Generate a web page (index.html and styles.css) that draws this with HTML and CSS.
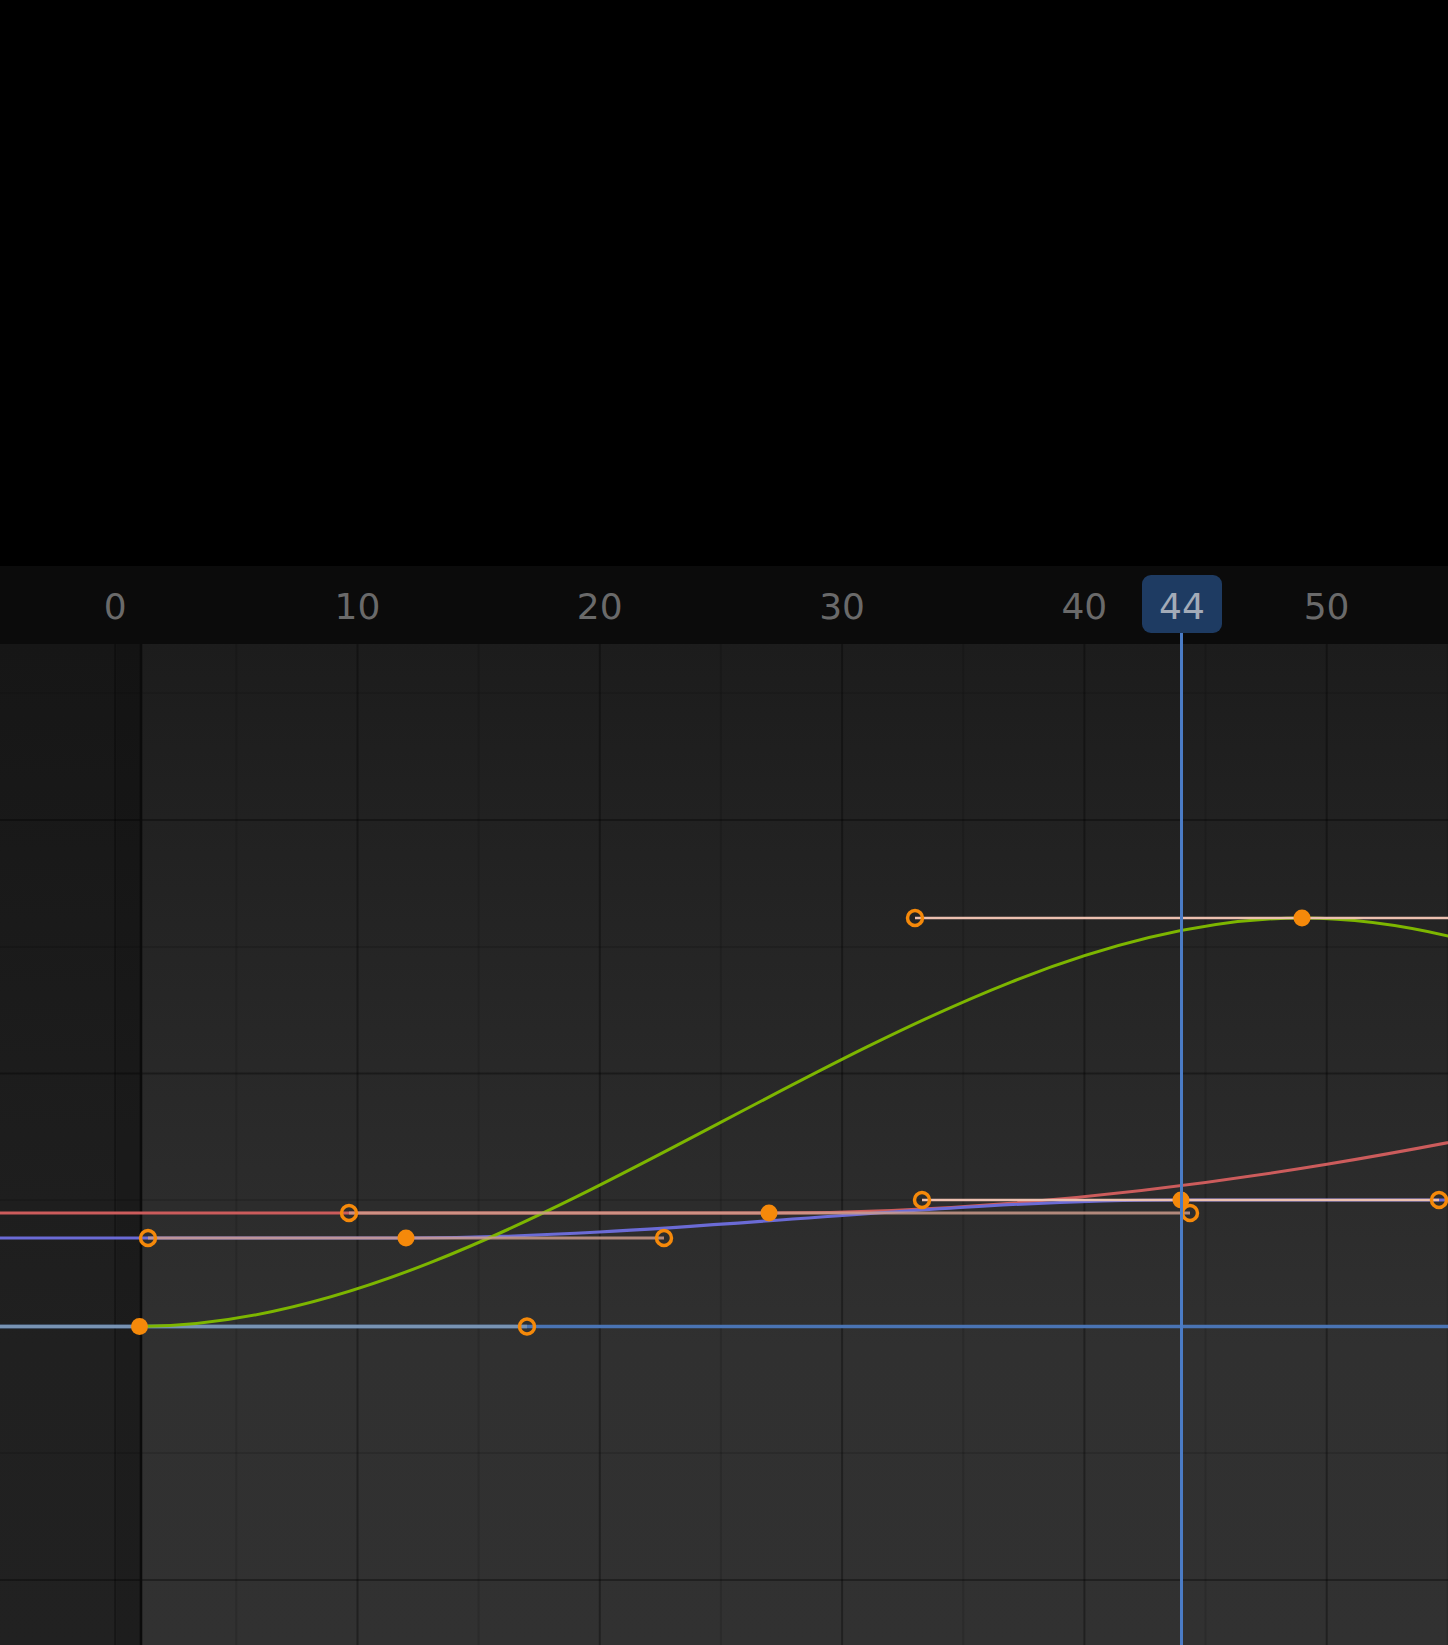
FILE: index.html
```html
<!DOCTYPE html>
<html lang="en">
<head>
<meta charset="utf-8">
<title>Graph Editor</title>
<link rel="stylesheet" href="styles.css">
</head>
<body>
<div class="app">
  <div class="topbar"></div>
  <div class="editor">
    <div class="ruler">
      <span class="tick">0</span>
      <span class="tick">10</span>
      <span class="tick">20</span>
      <span class="tick">30</span>
      <span class="tick">40</span>
      <span class="tick">50</span>
    </div>
    <svg class="graph" width="1448" height="1001" viewBox="0 0 1448 1001" xmlns="http://www.w3.org/2000/svg">
      <defs>
        <linearGradient id="bgMain" x1="0" y1="0" x2="0" y2="1">
          <stop offset="0" stop-color="#1c1c1c"/>
          <stop offset="0.7" stop-color="#303030"/>
          <stop offset="1" stop-color="#313131"/>
        </linearGradient>
        <linearGradient id="bgLeft" x1="0" y1="0" x2="0" y2="1">
          <stop offset="0" stop-color="#161616"/>
          <stop offset="0.7" stop-color="#202020"/>
          <stop offset="1" stop-color="#212121"/>
        </linearGradient>
      </defs>
      <rect x="0" y="0" width="1448" height="1001" fill="url(#bgMain)"/>
      <rect x="0" y="0" width="141" height="1001" fill="url(#bgLeft)"/>
      <rect x="117" y="0" width="24" height="1001" fill="rgba(0,0,0,0.1)"/>

      <g class="minor">
        <line x1="236.3" y1="0" x2="236.3" y2="1001"/>
        <line x1="478.6" y1="0" x2="478.6" y2="1001"/>
        <line x1="720.9" y1="0" x2="720.9" y2="1001"/>
        <line x1="963.2" y1="0" x2="963.2" y2="1001"/>
        <line x1="1205.5" y1="0" x2="1205.5" y2="1001"/>
        <line x1="1447.8" y1="0" x2="1447.8" y2="1001"/>
        <line x1="0" y1="49" x2="1448" y2="49" class="faint"/>
        <line x1="0" y1="303" x2="1448" y2="303"/>
        <line x1="0" y1="556" x2="1448" y2="556"/>
        <line x1="0" y1="809" x2="1448" y2="809"/>
      </g>
      <g class="major">
        <line x1="115.2" y1="0" x2="115.2" y2="1001"/>
        <line x1="357.5" y1="0" x2="357.5" y2="1001"/>
        <line x1="599.8" y1="0" x2="599.8" y2="1001"/>
        <line x1="842.1" y1="0" x2="842.1" y2="1001"/>
        <line x1="1084.4" y1="0" x2="1084.4" y2="1001"/>
        <line x1="1326.7" y1="0" x2="1326.7" y2="1001"/>
        <line x1="0" y1="176" x2="1448" y2="176"/>
        <line x1="0" y1="429.5" x2="1448" y2="429.5"/>
        <line x1="0" y1="683" x2="1448" y2="683"/>
        <line x1="0" y1="936" x2="1448" y2="936"/>
      </g>
      <line class="start-frame" x1="141" y1="0" x2="141" y2="1001"/>

      <!-- curves -->
      <line class="curve-blue" x1="0" y1="682.5" x2="1448" y2="682.5"/>
      <line class="curve-blue-handle" x1="0" y1="682.5" x2="527" y2="682.5"/>
      <path class="curve-red" d="M0 569 L769 569 C1190 569 1550 480 1900 400"/>
      <path class="curve-purple" d="M0 594 L406 594 C664 594 922 556 1181 556 L1448 556"/>
      <path class="curve-green" d="M139.5 682.5 C527 682.5 915 274 1302 274 C1689 274 2077 682.5 2464 682.5"/>

      <!-- handle lines -->
      <line class="handle-dim" x1="349" y1="569" x2="1190" y2="569"/>
      <line class="handle-dim" x1="148" y1="594" x2="664" y2="594"/>
      <line class="handle-lit" x1="922" y1="556" x2="1439" y2="556"/>
      <line class="handle-lit" x1="915" y1="274" x2="1448" y2="274"/>

      <!-- keyframes -->
      <circle class="key" cx="769" cy="569" r="8.5"/>
      <circle class="key" cx="406" cy="594" r="8.5"/>
      <circle class="key" cx="1181" cy="556" r="8.5"/>
      <circle class="key" cx="1302" cy="274" r="8.5"/>
      <circle class="key" cx="139.5" cy="682.5" r="8.5"/>

      <!-- handles -->
      <circle class="handle" cx="349" cy="569" r="7.5"/>
      <circle class="handle" cx="1190" cy="569" r="7.5"/>
      <circle class="handle" cx="148" cy="594" r="7.5"/>
      <circle class="handle" cx="664" cy="594" r="7.5"/>
      <circle class="handle" cx="922" cy="556" r="7.5"/>
      <circle class="handle" cx="1439" cy="556" r="7.5"/>
      <circle class="handle" cx="915" cy="274" r="7.5"/>
      <circle class="handle" cx="527" cy="682.5" r="7.5"/>
    </svg>
    <div class="playhead">
      <div class="ph-line"></div>
      <div class="ph-label">44</div>
    </div>
  </div>
</div>
</body>
</html>
```

FILE: styles.css
```css
html, body {
  margin: 0;
  padding: 0;
  background: #000;
}

.app {
  width: 1448px;
  height: 1645px;
  overflow: hidden;
  display: flex;
  flex-direction: column;
  font-family: "DejaVu Sans", "Liberation Sans", sans-serif;
}

.topbar {
  height: 566px;
  flex: none;
  background: #000;
}

.editor {
  position: relative;
  flex: 1;
  display: flex;
  flex-direction: column;
  overflow: hidden;
}

.ruler {
  height: 78px;
  flex: none;
  box-sizing: border-box;
  padding-top: 3px;
  background: #0b0b0b;
  display: flex;
  margin-left: -6px;
  width: 1454px;
  overflow: hidden;
}

.tick {
  flex: none;
  width: 242.3px;
  text-align: center;
  font-size: 36px;
  line-height: 75px;
  color: #6a6a6a;
}

.graph {
  display: block;
  flex: none;
}

.minor line {
  stroke: rgba(0, 0, 0, 0.12);
  stroke-width: 2;
}

.minor line.faint {
  stroke: rgba(0, 0, 0, 0.07);
}

.major line {
  stroke: rgba(0, 0, 0, 0.33);
  stroke-width: 2;
}

.start-frame {
  stroke: #0b0b0b;
  stroke-width: 2.5;
}

.curve-blue {
  stroke: #4a74b4;
  stroke-width: 3.5;
}

.curve-blue-handle {
  stroke: #7893b3;
  stroke-width: 3.5;
}

.curve-red {
  fill: none;
  stroke: #cc5c5c;
  stroke-width: 3;
}

.curve-purple {
  fill: none;
  stroke: #6b6bd6;
  stroke-width: 3;
}

.curve-green {
  fill: none;
  stroke: #7db600;
  stroke-width: 3;
}

.handle-dim {
  stroke: rgba(208, 158, 142, 0.82);
  stroke-width: 3;
}

.handle-lit {
  stroke: #ecc0b0;
  stroke-width: 2.5;
}

.key {
  fill: #f5890a;
}

.handle {
  fill: none;
  stroke: #f5890a;
  stroke-width: 3.5;
}

.playhead {
  position: absolute;
  left: 1142px;
  top: 9px;
  bottom: 0;
  width: 80px;
}

.ph-line {
  position: absolute;
  left: 38px;
  width: 3px;
  top: 40px;
  bottom: 0;
  background: #4b7cc6;
}

.ph-label {
  position: absolute;
  left: 0;
  top: 0;
  width: 80px;
  height: 58px;
  border-radius: 9px;
  background: #1e3b62;
  color: #a3abb8;
  font-size: 36px;
  line-height: 64px;
  text-align: center;
}
```
